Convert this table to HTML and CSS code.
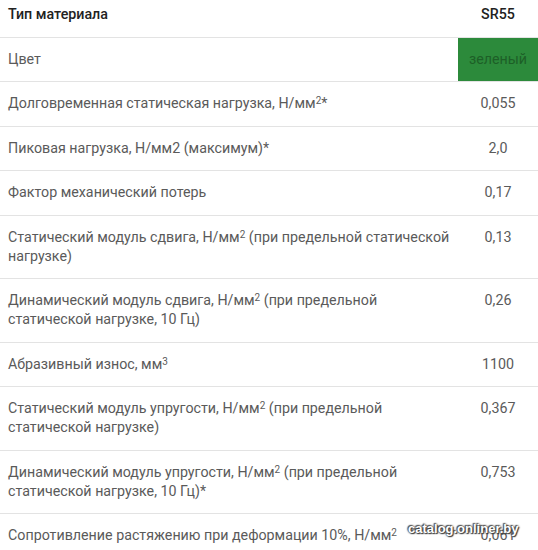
FILE: index.html
```html
<!DOCTYPE html>
<html lang="ru">
<head>
<meta charset="utf-8">
<link rel="stylesheet" href="styles.css">
</head>
<body>
<div class="page">
  <div class="specs">
    <div class="row head">
      <div class="label">Тип материала</div>
      <div class="value">SR55</div>
    </div>
    <div class="row">
      <div class="label">Цвет</div>
      <div class="value green">зеленый</div>
    </div>
    <div class="row">
      <div class="label">Долговременная статическая нагрузка, Н/мм<sup>2</sup>*</div>
      <div class="value">0,055</div>
    </div>
    <div class="row">
      <div class="label">Пиковая нагрузка, Н/мм2 (максимум)*</div>
      <div class="value">2,0</div>
    </div>
    <div class="row">
      <div class="label">Фактор механический потерь</div>
      <div class="value">0,17</div>
    </div>
    <div class="row">
      <div class="label">Статический модуль сдвига, Н/мм<sup>2</sup> (при предельной статической нагрузке)</div>
      <div class="value">0,13</div>
    </div>
    <div class="row">
      <div class="label">Динамический модуль сдвига, Н/мм<sup>2</sup> (при предельной статической нагрузке, 10 Гц)</div>
      <div class="value">0,26</div>
    </div>
    <div class="row">
      <div class="label">Абразивный износ, мм<sup>3</sup></div>
      <div class="value">1100</div>
    </div>
    <div class="row">
      <div class="label">Статический модуль упругости, Н/мм<sup>2</sup> (при предельной статической нагрузке)</div>
      <div class="value">0,367</div>
    </div>
    <div class="row">
      <div class="label">Динамический модуль упругости, Н/мм<sup>2</sup> (при предельной статической нагрузке, 10 Гц)*</div>
      <div class="value">0,753</div>
    </div>
    <div class="row">
      <div class="label">Сопротивление растяжению при деформации 10%, Н/мм<sup>2</sup></div>
      <div class="value">0,061</div>
    </div>
  </div>
  <div class="watermark">catalog.onliner.by</div>
</div>
</body>
</html>
```

FILE: styles.css
```css
html, body {
  margin: 0;
  padding: 0;
  background: #ffffff;
}

.page {
  position: relative;
  width: 538px;
  height: 550px;
  overflow: hidden;
  font-family: Roboto, "Liberation Sans", sans-serif;
  font-size: 14.25px;
  line-height: 19px;
  color: #5a5a5a;
}

.specs {
  display: flex;
  flex-direction: column;
}

.row {
  display: grid;
  grid-template-columns: 1fr 80px;
  border-bottom: 1px solid #e3e3e3;
}

.label {
  padding: 12px 2px 12.5px 8px;
}

.value {
  padding: 12px 0 12.5px;
  text-align: center;
}

.head .label,
.head .value {
  padding-top: 5px;
  color: #222222;
  font-weight: 500;
}

.green {
  background: #2c8a3b;
  color: #1d5f27;
}

sup {
  font-size: 10px;
  line-height: 1;
  vertical-align: 4px;
}

.watermark {
  position: absolute;
  left: 408px;
  top: 521px;
  font-family: "Liberation Sans", Arial, sans-serif;
  font-weight: bold;
  font-size: 13px;
  line-height: 16px;
  color: #ffffff;
  text-shadow: 0 0 2px #444, 0 0 2px #444, 1px 1px 1px #333, -1px -1px 1px #555;
}
```
